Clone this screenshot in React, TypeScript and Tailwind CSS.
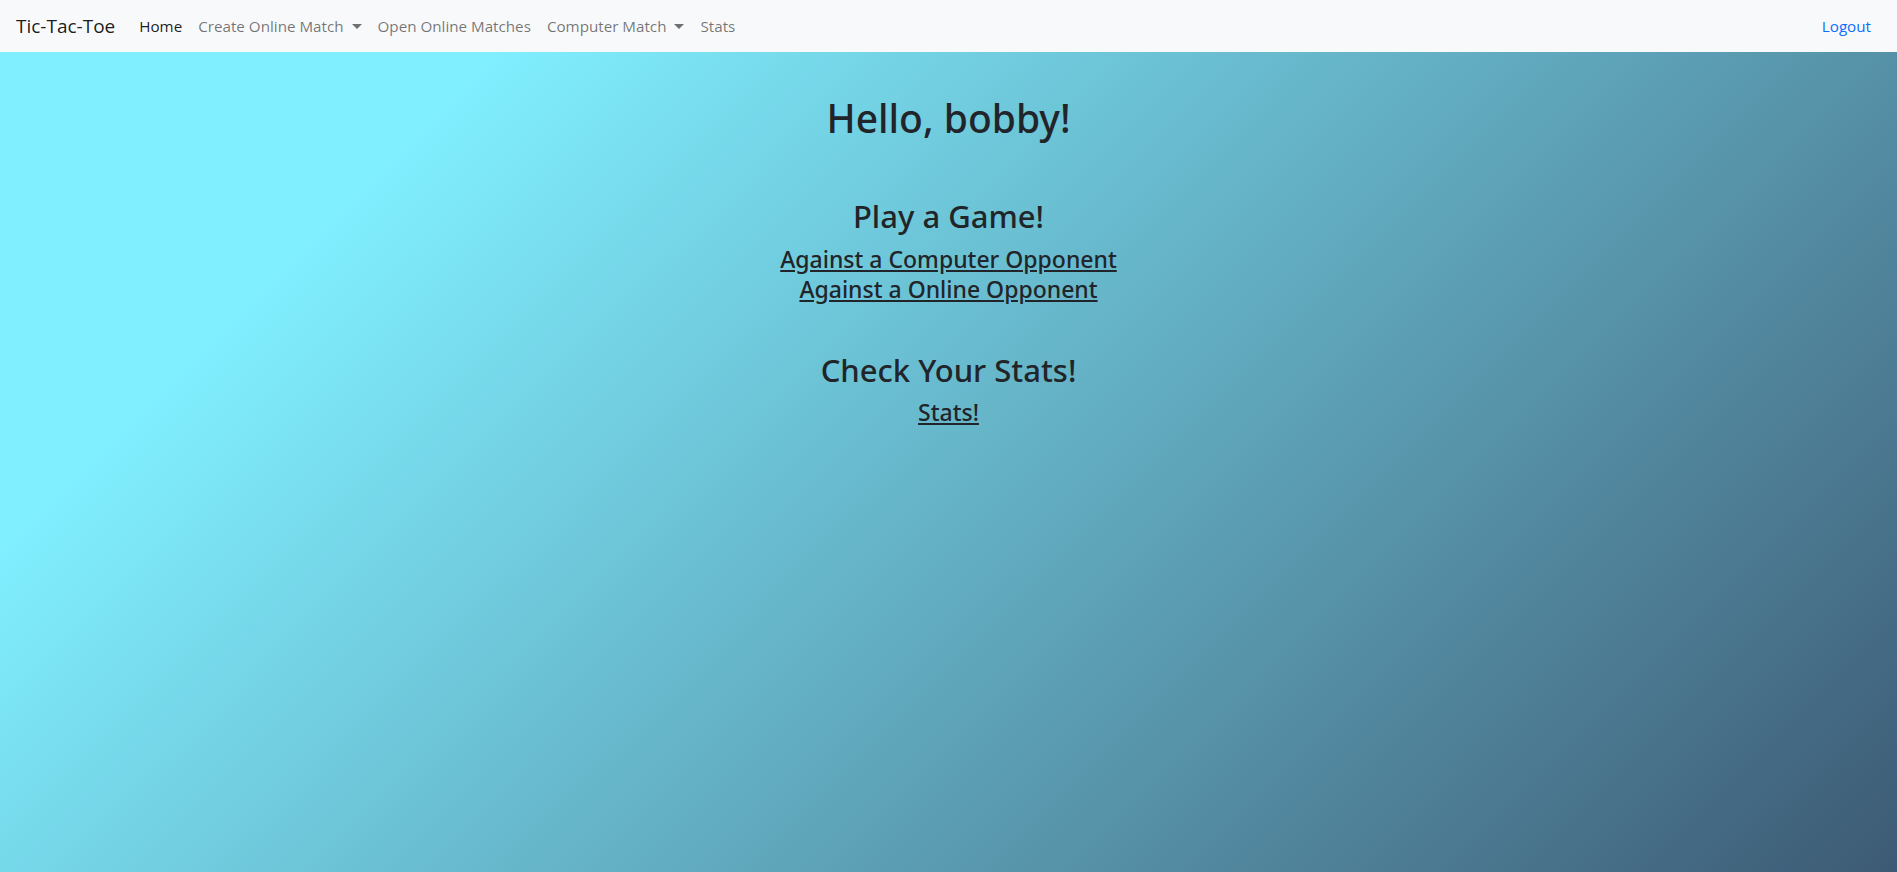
const navLinks = [
  { label: "Home", active: true },
  { label: "Create Online Match", caret: true },
  { label: "Open Online Matches" },
  { label: "Computer Match", caret: true },
  { label: "Stats" },
];

const App = () => {
  return (
    <div className="min-h-screen flex flex-col font-['Open_Sans',sans-serif] text-[#212529]">
      <nav className="h-[52px] bg-[#f8f9fa] flex items-center px-4">
        <a className="text-[19px] text-black/90 mr-4 leading-[30px]">Tic-Tac-Toe</a>
        <ul className="flex items-center">
          {navLinks.map((l) => (
            <li key={l.label}>
              <a
                className={`px-2 text-[15.2px] leading-6 flex items-center ${
                  l.active ? "text-black/90" : "text-black/55"
                }`}
              >
                {l.label}
                {l.caret && (
                  <span className="ml-[8px] w-0 h-0 border-x-[5px] border-x-transparent border-t-[5px] border-t-black/55" />
                )}
              </a>
            </li>
          ))}
        </ul>
        <a className="ml-auto mr-[10px] text-[15.2px] leading-6 text-[#0d6efd]">Logout</a>
      </nav>
      <main className="flex-1 bg-[linear-gradient(135deg,#80efff_18%,#3d5a74_100%)] flex flex-col items-center text-center pt-[42px] font-['Noto_Sans',sans-serif]">
        <h1 className="text-[39px] leading-[48px] font-medium">Hello, bobby!</h1>
        <h2 className="text-[31px] leading-[38px] font-medium mt-[55px]">Play a Game!</h2>
        <a className="text-[23px] leading-[30px] font-medium underline mt-[9px]">Against a Computer Opponent</a>
        <a className="text-[23px] leading-[30px] font-medium underline">Against a Online Opponent</a>
        <h2 className="text-[31px] leading-[38px] font-medium mt-[47px]">Check Your Stats!</h2>
        <a className="text-[23px] leading-[30px] font-medium underline mt-2">Stats!</a>
      </main>
    </div>
  );
};

export default App;
